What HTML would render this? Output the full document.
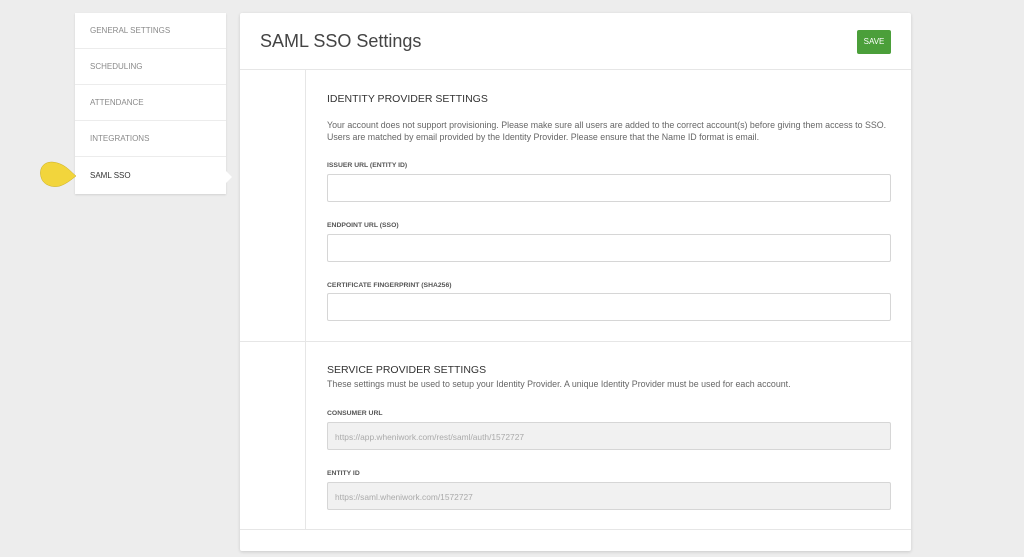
<!DOCTYPE html>
<html><head><style>
*{margin:0;padding:0;box-sizing:border-box}
body{width:1024px;height:557px;background:#ededed;font-family:"Liberation Sans",sans-serif;position:relative;overflow:hidden}
.a{position:absolute}
.side{left:75px;top:13px;width:151px;height:181px;background:#fff;box-shadow:0 1px 2px rgba(0,0,0,.12)}
.item{position:absolute;left:0;width:151px;height:36px;border-bottom:1px solid #ececec;font-size:8px;color:#8a8a8a;padding:13px 0 0 15px}
.card{left:240px;top:13px;width:671px;height:538px;background:#fff;box-shadow:0 1px 3px rgba(0,0,0,.15);border-radius:2px}
.lbl{font-size:6.8px;font-weight:bold;color:#555;left:327px}
.inp{left:327px;width:564px;height:28px;border:1px solid #d6d6d6;border-radius:2px;background:#fff}
.ro{background:#f1f1f1;font-size:8.4px;color:#aaa;padding:9px 0 0 7px}
.p{font-size:8.85px;color:#666;left:327px;line-height:12px;white-space:nowrap}
</style></head><body>
<div class="a side">
<div class="item" style="top:0">GENERAL SETTINGS</div>
<div class="item" style="top:36px">SCHEDULING</div>
<div class="item" style="top:72px">ATTENDANCE</div>
<div class="item" style="top:108px">INTEGRATIONS</div>
<div class="item" style="top:145px;border:none;color:#333">SAML SSO</div>
</div>
<div class="a" style="left:226px;top:171px;width:0;height:0;border-top:6px solid transparent;border-bottom:6px solid transparent;border-left:6px solid #fff"></div>
<svg class="a" style="left:38px;top:160px" width="42" height="30"><path d="M14 2 C4 2 1 10 3 17 C5 25 14 28 22 26 C28 24 33 20 38 16 C31 10 26 3 14 2Z" fill="#f2d53c" stroke="#c9ad20" stroke-width=".5"/></svg>
<div class="a card"></div>
<div class="a" style="left:260px;top:31px;font-size:18px;color:#444">SAML SSO Settings</div>
<div class="a" style="left:857px;top:30px;width:34px;height:24px;background:#4b9f3a;border-radius:2px;color:#fff;font-size:8px;text-align:center;line-height:24px">SAVE</div>
<div class="a" style="left:240px;top:69px;width:671px;height:1px;background:#e6e6e6"></div>
<div class="a" style="left:305px;top:70px;width:1px;height:459px;background:#e6e6e6"></div>
<div class="a" style="left:240px;top:341px;width:671px;height:1px;background:#e6e6e6"></div>
<div class="a" style="left:240px;top:529px;width:671px;height:1px;background:#e6e6e6"></div>
<div class="a" style="left:327px;top:93px;font-size:10.5px;color:#333">IDENTITY PROVIDER SETTINGS</div>
<div class="a p" style="top:119px">Your account does not support provisioning. Please make sure all users are added to the correct account(s) before giving them access to SSO.<br>Users are matched by email provided by the Identity Provider. Please ensure that the Name ID format is email.</div>
<div class="a lbl" style="top:162px">ISSUER URL (ENTITY ID)</div>
<div class="a inp" style="top:174px"></div>
<div class="a lbl" style="top:222px">ENDPOINT URL (SSO)</div>
<div class="a inp" style="top:234px"></div>
<div class="a lbl" style="top:282px">CERTIFICATE FINGERPRINT (SHA256)</div>
<div class="a inp" style="top:293px"></div>
<div class="a" style="left:327px;top:364px;font-size:10.5px;color:#333">SERVICE PROVIDER SETTINGS</div>
<div class="a p" style="top:378px">These settings must be used to setup your Identity Provider. A unique Identity Provider must be used for each account.</div>
<div class="a lbl" style="top:410px">CONSUMER URL</div>
<div class="a inp ro" style="top:422px">https://app.wheniwork.com/rest/saml/auth/1572727</div>
<div class="a lbl" style="top:470px">ENTITY ID</div>
<div class="a inp ro" style="top:482px">https://saml.wheniwork.com/1572727</div>
</body></html>
